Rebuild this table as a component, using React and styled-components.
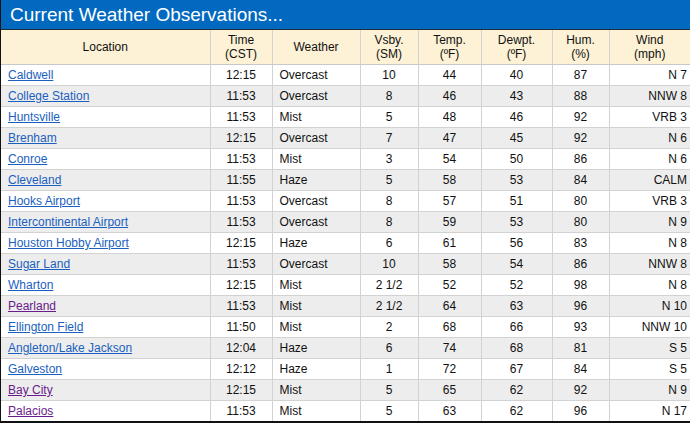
import React from 'react'
import styled, { createGlobalStyle } from 'styled-components'

const rows = [
  ['Caldwell', '12:15', 'Overcast', '10', '44', '40', '87', 'N 7'],
  ['College Station', '11:53', 'Overcast', '8', '46', '43', '88', 'NNW 8'],
  ['Huntsville', '11:53', 'Mist', '5', '48', '46', '92', 'VRB 3'],
  ['Brenham', '12:15', 'Overcast', '7', '47', '45', '92', 'N 6'],
  ['Conroe', '11:53', 'Mist', '3', '54', '50', '86', 'N 6'],
  ['Cleveland', '11:55', 'Haze', '5', '58', '53', '84', 'CALM'],
  ['Hooks Airport', '11:53', 'Overcast', '8', '57', '51', '80', 'VRB 3'],
  ['Intercontinental Airport', '11:53', 'Overcast', '8', '59', '53', '80', 'N 9'],
  ['Houston Hobby Airport', '12:15', 'Haze', '6', '61', '56', '83', 'N 8'],
  ['Sugar Land', '11:53', 'Overcast', '10', '58', '54', '86', 'NNW 8'],
  ['Wharton', '12:15', 'Mist', '2 1/2', '52', '52', '98', 'N 8'],
  ['Pearland', '11:53', 'Mist', '2 1/2', '64', '63', '96', 'N 10', true],
  ['Ellington Field', '11:50', 'Mist', '2', '68', '66', '93', 'NNW 10'],
  ['Angleton/Lake Jackson', '12:04', 'Haze', '6', '74', '68', '81', 'S 5'],
  ['Galveston', '12:12', 'Haze', '1', '72', '67', '84', 'S 5'],
  ['Bay City', '12:15', 'Mist', '5', '65', '62', '92', 'N 9', true],
  ['Palacios', '11:53', 'Mist', '5', '63', '62', '96', 'N 17', true],
]

const GlobalStyle = createGlobalStyle`
  body {
    margin: 0;
    font-family: "Liberation Sans", Arial, sans-serif;
    background: #fff;
  }
`

const Panel = styled.div`
  width: 690px;
  height: 423px;
  overflow: hidden;
  border-left: 1px solid #111;
  border-bottom: 2px solid #111;
  box-sizing: border-box;
`

const TitleBar = styled.div`
  height: 29px;
  background: #0169c0;
  border-bottom: 1px solid #1d2b3a;
  color: #fff;
  font-size: 19px;
  line-height: 29px;
  padding-left: 9px;
`

const Table = styled.table`
  width: 689px;
  border-collapse: collapse;
  table-layout: fixed;
  font-size: 12px;
  color: #111;
`

const Head = styled.th`
  background: #fdf2d6;
  font-weight: normal;
  height: 34px;
  padding: 0;
  line-height: 14px;
  text-align: center;
  border-left: 1px solid #d2d2d2;
  border-bottom: 1px solid #c8c8c8;
  &:first-child { border-left: none; }
`

const Row = styled.tr`
  background: ${p => (p.$odd ? '#ededed' : '#fff')};
`

const Cell = styled.td`
  height: 20px;
  padding: 0 ${p => (p.$align === 'right' ? '3px' : '7px')} 0 7px;
  text-align: ${p => p.$align || 'center'};
  border-left: 1px solid #d2d2d2;
  border-top: 1px solid #d2d2d2;
  white-space: nowrap;
  &:first-child { border-left: none; }
`

const Link = styled.a`
  color: ${p => (p.$visited ? '#6a1b8c' : '#1b5fbf')};
  text-decoration: underline;
`

const cols = [209, 62, 88, 58, 63, 71, 57, 81]
const heads = [
  ['Location'],
  ['Time', '(CST)'],
  ['Weather'],
  ['Vsby.', '(SM)'],
  ['Temp.', '(ºF)'],
  ['Dewpt.', '(ºF)'],
  ['Hum.', '(%)'],
  ['Wind', '(mph)'],
]

export default function App() {
  return (
    <Panel>
      <GlobalStyle />
      <TitleBar>Current Weather Observations...</TitleBar>
      <Table>
        <colgroup>
          {cols.map((w, i) => <col key={i} style={{ width: w }} />)}
        </colgroup>
        <thead>
          <tr>
            {heads.map((h, i) => (
              <Head key={i}>
                {h.map((l, j) => <div key={j}>{l}</div>)}
              </Head>
            ))}
          </tr>
        </thead>
        <tbody>
          {rows.map((r, i) => (
            <Row key={r[0]} $odd={i % 2 === 1}>
              <Cell $align="left"><Link href="#" $visited={r[8]}>{r[0]}</Link></Cell>
              <Cell>{r[1]}</Cell>
              <Cell $align="left">{r[2]}</Cell>
              <Cell>{r[3]}</Cell>
              <Cell>{r[4]}</Cell>
              <Cell>{r[5]}</Cell>
              <Cell>{r[6]}</Cell>
              <Cell $align="right">{r[7]}</Cell>
            </Row>
          ))}
        </tbody>
      </Table>
    </Panel>
  )
}
